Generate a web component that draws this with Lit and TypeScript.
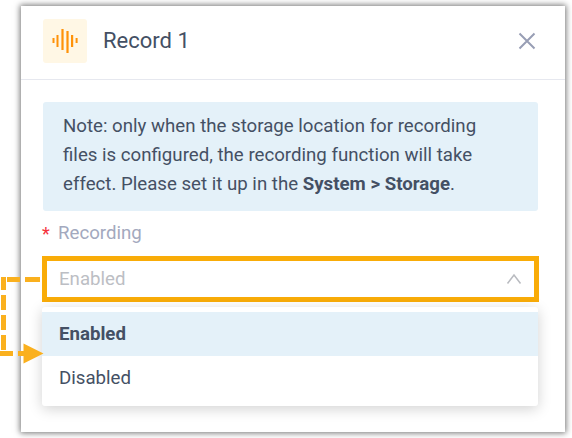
import { LitElement, html, css, svg } from "lit";
import { customElement, state } from "lit/decorators.js";
import { classMap } from "lit/directives/class-map.js";

const BARS = [
  [9.5, 19, 2, 5],
  [13.5, 16, 2, 12],
  [18.4, 10, 2.2, 21],
  [23.4, 12, 2.2, 22],
  [28, 16, 2.2, 12],
  [32.6, 19, 2, 5],
];

@customElement("app-root")
export class AppRoot extends LitElement {
  @state() private selected = "Enabled";
  private options = ["Enabled", "Disabled"];

  static styles = css`
    :host {
      display: block;
      position: relative;
      box-sizing: border-box;
      height: 438px;
      padding: 6px 7px 6px 21px;
      overflow: hidden;
      background: #fff;
      color: #445064;
      font: 18.67px/29px Roboto, sans-serif;
    }
    .panel {
      box-sizing: border-box;
      width: 544px;
      height: 426px;
      background: #fff;
      box-shadow: 0 0 6px 1px rgba(0, 0, 0, 0.55);
    }
    .header {
      display: flex;
      align-items: center;
      box-sizing: border-box;
      height: 74px;
      padding: 0 29px 4px 22px;
      border-bottom: 1px solid #e6e8ef;
    }
    .tile {
      width: 44px;
      height: 44px;
      border-radius: 3px;
      background: #fff7e5;
    }
    .title {
      flex: 1;
      margin: 0 0 0 16px;
      font-size: 22px;
      font-weight: 400;
    }
    .close { display: block; width: 18px; height: 18px; }
    .body { padding: 22px 26px 0 21px; }
    .note {
      box-sizing: border-box;
      height: 109px;
      margin-left: 1px;
      margin-right: 1px;
      padding: 10px 20px;
      border-radius: 3px;
      background: #e4f1f9;
      white-space: nowrap;
    }
    .line { display: block; }
    .label {
      display: flex;
      height: 29px;
      margin: 8px 0 8px;
      color: #a3a9be;
    }
    .star { width: 16px; color: #f5323c; font-size: 18px; }
    .select {
      display: flex;
      align-items: center;
      justify-content: space-between;
      box-sizing: border-box;
      height: 46px;
      padding: 0 12px;
      border: 5px solid #f9ac08;
      color: #bcbec4;
    }
    .menu {
      box-sizing: border-box;
      height: 99px;
      margin: 5px 1px 0 0;
      padding-top: 5px;
      border-radius: 3px;
      background: #fff;
      box-shadow: 0 3px 14px rgba(0, 0, 0, 0.18);
    }
    .option {
      height: 44px;
      padding-left: 17px;
      line-height: 44px;
    }
    .active { background: #e4f1f9; font-weight: 700; }
    .pointer { position: absolute; left: 0; top: 270px; }
  `;

  render() {
    return html`
      <section class="panel">
        <header class="header">
          <svg class="tile" viewBox="0 0 44 44">
            ${BARS.map(([x, y, w, h]) => svg`<rect x=${x} y=${y} width=${w} height=${h} fill="#ff9208" />`)}
          </svg>
          <h1 class="title">Record 1</h1>
          <svg class="close" viewBox="0 0 18 18" fill="none" stroke="#989eb5" stroke-width="2">
            <path d="M1.5 1.5 16.5 16.5M16.5 1.5 1.5 16.5" />
          </svg>
        </header>
        <div class="body">
          <div class="note">
            <span class="line">Note: only when the storage location for recording</span>
            <span class="line">files is configured, the recording function will take</span>
            <span class="line">effect. Please set it up in the <b>System &gt; Storage</b>.</span>
          </div>
          <div class="label"><span class="star">*</span>Recording</div>
          <div class="select">
            <span>${this.selected}</span>
            <svg width="16" height="12" viewBox="0 0 16 12" fill="none" stroke="#b9bbc0" stroke-width="1.5">
              <path d="M1.5 10.5 8 2 14.5 10.5" />
            </svg>
          </div>
          <div class="menu">
            ${this.options.map((o) => html`
              <div class=${classMap({ option: true, active: o === this.selected })}
                @click=${() => (this.selected = o)}>${o}</div>`)}
          </div>
        </div>
      </section>
      <svg class="pointer" width="46" height="96" viewBox="0 0 46 96" fill="#fab01e">
        <path d="M25 7h15v5H25zM7 7h13v5H7zM1 7h5v13H1zM1 25h5v15H1zM1 45h5v15H1zM1 65h5v15H1zM0 81h13v5H0zM18 81h6v5h-6zM23.5 73.5 43.5 83.5 23.5 93.5z" />
      </svg>
    `;
  }
}
